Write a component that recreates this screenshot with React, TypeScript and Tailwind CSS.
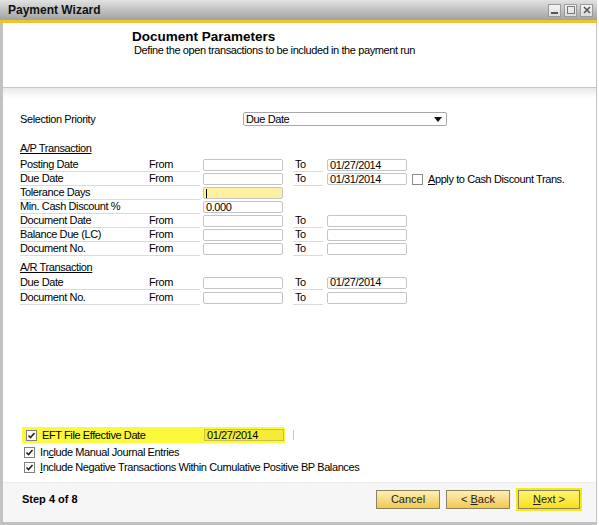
import type { ReactNode } from 'react';

const FONT = "font-['Liberation_Sans',Arial,sans-serif]";

const Field = ({ value, className = '' }: { value?: string; className?: string }) => (
    <div className={`w-[80px] h-[12px] border border-[#c4c4c4] rounded-[2px] bg-white pl-[2px] flex items-center leading-none ${className}`}>
        {value}
    </div>
);

const Check = ({ checked }: { checked?: boolean }) => (
    <div className="w-[11px] h-[11px] border border-[#808080] bg-white flex items-center justify-center shrink-0">
        {checked && (
            <svg width="9" height="9" viewBox="0 0 9 9">
                <path d="M1.5 4.5 L3.5 6.5 L7.5 2" fill="none" stroke="#222" strokeWidth="1.6" />
            </svg>
        )}
    </div>
);

// one form line: label (+ "From") with underline, an input, then optional "To" + input
const Row = ({ label, from = true, to = true, value, toValue, h = 'h-[14px]', extra, field }: {
    label: string; from?: boolean; to?: boolean; value?: string; toValue?: string; h?: string; extra?: ReactNode; field?: ReactNode;
}) => (
    <div className={`flex items-center ${h}`}>
        <div className="w-[180px] h-full border-b border-[#dadada] flex items-center">
            <span className="w-[129px]">{label}</span>
            {from && <span>From</span>}
        </div>
        <div className="ml-[3px]">{field ?? <Field value={value} />}</div>
        {to && (
            <>
                <div className="ml-[10px] w-[30px] h-full border-b border-[#dadada] flex items-center pl-[2px]">To</div>
                <div className="ml-[4px]"><Field value={toValue} /></div>
            </>
        )}
        {extra}
    </div>
);

const WinButton = ({ children }: { children: ReactNode }) => (
    <div className="w-[13px] h-[13px] border border-[#9a9a9a] bg-gradient-to-b from-[#f4f4f4] to-[#dcdcdc] flex items-center justify-center">
        {children}
    </div>
);

const Button = ({ children, primary }: { children: ReactNode; primary?: boolean }) => (
    <div className={primary ? 'p-[2px] bg-[#f5ea1c] -my-[2px]' : ''}>
        <div className={`h-[19px] border border-[#8a8262] flex items-center justify-center tracking-normal text-[#222] ${primary ? 'w-[62px] bg-gradient-to-b from-[#fff46a] to-[#f8e000]' : 'w-[64px] bg-gradient-to-b from-[#fdeeb4] to-[#f3c84a]'}`}>
            <span className="whitespace-pre">{children}</span>
        </div>
    </div>
);

const App = () => {
    return (
        <div className={`w-[599px] h-[525px] bg-white text-[11px] tracking-[-0.4px] text-black ${FONT}`}>
            <div className="w-[597px] h-full flex flex-col">
                {/* title bar */}
                <div className="h-[20px] bg-gradient-to-b from-[#e2e2e2] to-[#a2a2a2] flex items-center pl-[8px] pr-[4px]">
                    <span className="text-[12px] font-bold tracking-normal text-[#111]">Payment Wizard</span>
                    <div className="ml-auto flex gap-[3px]">
                        <WinButton><div className="w-[7px] h-[2px] bg-[#555] mt-[6px]" /></WinButton>
                        <WinButton><div className="w-[8px] h-[8px] border border-[#777]" /></WinButton>
                        <WinButton>
                            <svg width="8" height="8" viewBox="0 0 8 8"><path d="M1 1 L7 7 M7 1 L1 7" stroke="#555" strokeWidth="1.6" /></svg>
                        </WinButton>
                    </div>
                </div>
                <div className="h-[3px] bg-[#f0c22c]" />

                <div className="flex-1 flex flex-col border-l-[3px] border-r border-b-[3px] border-[#c2c2c2]">
                    {/* header */}
                    <div className="h-[64px] pl-[129px] pt-[6px]">
                        <div className="text-[13.5px] font-bold tracking-normal leading-[15px]">Document Parameters</div>
                        <div className="pl-[2px] leading-[12px]">Define the open transactions to be included in the payment run</div>
                    </div>
                    <div className="h-px bg-[#c6c6c6]" />
                    <div className="h-[10px] bg-gradient-to-b from-[#e9e9e9] to-white" />

                    {/* form */}
                    <div className="pl-[17px] flex flex-col">
                        <div className="mt-[14px] h-[14px] flex items-center">
                            <span className="w-[223px]">Selection Priority</span>
                            <div className="w-[204px] h-[14px] border border-[#a8a8a8] rounded-[2px] flex items-center pl-[2px]">
                                Due Date
                                <svg className="ml-auto mr-[4px]" width="8" height="5" viewBox="0 0 8 5"><path d="M0 0 H8 L4 5 Z" fill="#111" /></svg>
                            </div>
                        </div>

                        <div className="mt-[15px] h-[14px] flex items-center"><span className="underline">A/P Transaction</span></div>
                        <div className="mt-[3px] flex flex-col">
                            <Row label="Posting Date" toValue="01/27/2014" />
                            <Row
                                label="Due Date"
                                toValue="01/31/2014"
                                extra={
                                    <div className="ml-[5px] flex items-center gap-[5px]">
                                        <div className="w-[11px] h-[11px] border border-[#8a8a8a] bg-white" />
                                        <span><span className="underline">A</span>pply to Cash Discount Trans.</span>
                                    </div>
                                }
                            />
                            <Row
                                label="Tolerance Days"
                                from={false}
                                to={false}
                                field={
                                    <div className="w-[80px] h-[12px] border border-[#c4c4c4] rounded-[2px] bg-[#fdf0a0] pl-[2px] flex items-center">
                                        <div className="w-px h-[9px] bg-black" />
                                    </div>
                                }
                            />
                            <Row label="Min. Cash Discount %" from={false} to={false} value="0.000" />
                            <Row label="Document Date" />
                            <Row label="Balance Due (LC)" />
                            <Row label="Document No." />
                        </div>

                        <div className="mt-[4px] h-[14px] flex items-center"><span className="underline">A/R Transaction</span></div>
                        <div className="mt-[1px] flex flex-col">
                            <Row label="Due Date" toValue="01/27/2014" h="h-[15px]" />
                            <Row label="Document No." h="h-[15px]" />
                        </div>

                        {/* options */}
                        <div className="mt-[122px] flex items-center">
                            <div className="ml-[2px] w-[263px] h-[16px] bg-[#fafa3a] flex items-center pl-[4px]">
                                <Check checked />
                                <span className="ml-[5px] w-[162px]">EFT File Effective Date</span>
                                <div className="w-[80px] h-[12px] border border-[#c9c04a] bg-[#f6ec38] pl-[2px] flex items-center">01/27/2014</div>
                            </div>
                            <div className="ml-[8px] w-px h-[10px] bg-[#c8c8c8]" />
                        </div>
                        <div className="mt-[2px] h-[15px] flex items-center pl-[4px]">
                            <Check checked />
                            <span className="ml-[5px]">In<span className="underline">c</span>lude Manual Journal Entries</span>
                        </div>
                        <div className="h-[15px] flex items-center pl-[4px]">
                            <Check checked />
                            <span className="ml-[5px]"><span className="underline">I</span>nclude Negative Transactions Within Cumulative Positive BP Balances</span>
                        </div>
                    </div>

                    {/* footer */}
                    <div className="mt-auto h-[40px] bg-[#f6f6f6] border-t border-[#ececec] pt-[4px] pl-[19px] pr-[14px] flex items-start">
                        <div className="h-[24px] flex items-center font-bold tracking-normal">Step 4 of 8</div>
                        <div className="ml-auto h-[24px] flex items-center gap-[6px]">
                            <Button>Cancel</Button>
                            <Button>{'< '}<span className="underline">B</span>ack</Button>
                            <Button primary><span className="underline">N</span>{'ext >'}</Button>
                        </div>
                    </div>
                </div>
            </div>
        </div>
    );
};

export default App;
